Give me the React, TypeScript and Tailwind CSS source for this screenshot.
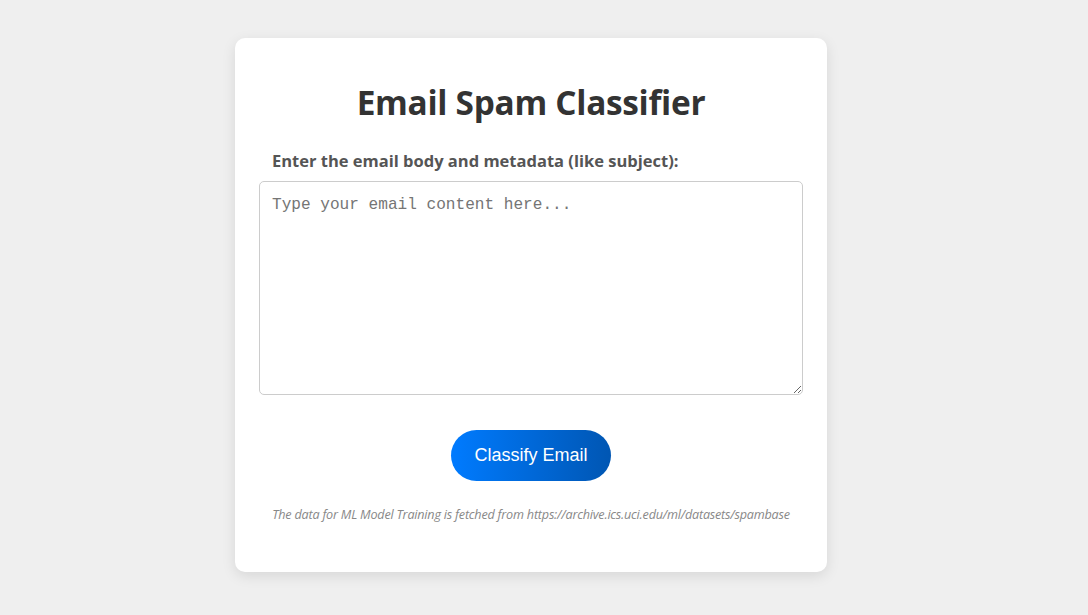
import React from "react";

export default function App() {
  return (
    <div className="min-h-screen w-full bg-[#efefef] flex justify-center pt-[38px] pr-[26px]">
      <div
        className="w-[592px] h-[534px] bg-white rounded-[10px] shadow-[0_4px_14px_rgba(0,0,0,0.1)] px-6 pt-[42px] flex flex-col"
        style={{ fontFamily: '"Open Sans", "Noto Sans", sans-serif' }}
      >
        <h1 className="text-center text-[33.4px] leading-[44px] font-bold text-[#333] tracking-[-0.3px]">
          Email Spam Classifier
        </h1>
        <label className="mt-[26px] ml-[13px] text-[16.5px] leading-[22px] font-bold text-[#555]">
          Enter the email body and metadata (like subject):
        </label>
        <textarea
          className="mt-[9px] w-[544px] h-[214px] border border-[#ccc] rounded-[5px] px-3 pt-[12px] pb-[10px] text-[16.1px] leading-[22px] placeholder:text-[#757575] outline-none"
          style={{ fontFamily: '"Liberation Mono", monospace' }}
          placeholder="Type your email content here..."
        />
        <div className="flex justify-center mt-[35px]">
          <button
            className="w-[160px] h-[51px] rounded-full bg-[linear-gradient(to_right,#007bff,#0056b3)] text-white text-[18px]"
            style={{ fontFamily: '"Liberation Sans", Arial, sans-serif' }}
          >
            Classify Email
          </button>
        </div>
        <p className="mt-[25px] text-center text-[12.6px] italic text-[#888] tracking-[-0.2px]">
          The data for ML Model Training is fetched from https://archive.ics.uci.edu/ml/datasets/spambase
        </p>
      </div>
    </div>
  );
}
